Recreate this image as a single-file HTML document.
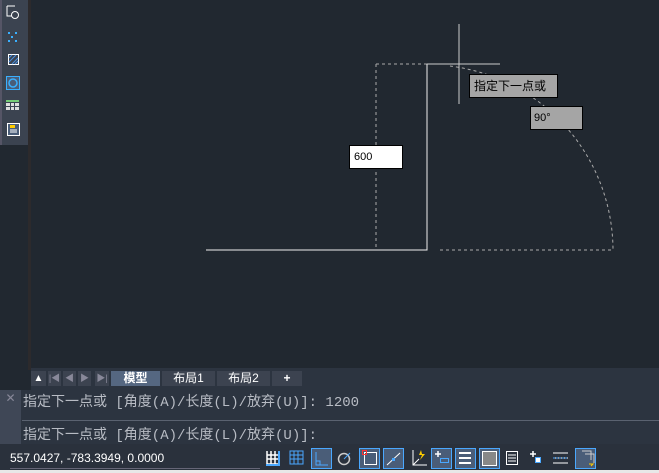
<!DOCTYPE html><html><head><meta charset="utf-8"><style>
*{margin:0;padding:0;box-sizing:border-box}
body{width:659px;height:473px;background:#212830;position:relative;overflow:hidden;font-family:"Liberation Sans","Noto Sans CJK SC",sans-serif}
.a{position:absolute}
.tab{position:absolute;top:371px;height:15px;background:#3c4350;color:#fff;font-size:12px;text-align:center;line-height:15px}
.cmd{position:absolute;left:23px;font-family:"Liberation Mono","Noto Sans CJK SC",monospace;font-size:14px;color:#b8bcc4}
</style></head><body>
<div class="a" style="left:0;top:0;width:28px;height:145px;background:#3b4350"></div>
<div class="a" style="left:0;top:0;width:2px;height:145px;background:#556"></div>
<div class="a" style="left:28px;top:0;width:3px;height:370px;background:#2c2a2c"></div>
<svg class="a" style="left:0;top:0" width="28" height="145">
<path d="M7 6v10h5M7 6h8" stroke="#fff" fill="none"/><circle cx="15" cy="15" r="3.5" stroke="#fff" fill="none"/>
<g fill="#3ab0ff"><rect x="8" y="32" width="2" height="2"/><rect x="15" y="32" width="2" height="2"/><rect x="11" y="36" width="2" height="2"/><rect x="8" y="40" width="2" height="2"/><rect x="15" y="40" width="2" height="2"/></g>
<rect x="8.5" y="54.5" width="10" height="10" stroke="#fff" fill="#3b4350"/><path d="M9 62l7-7M9 58l3-3M12 64l6-6M15 64l3-3" stroke="#4a8fdf"/>
<rect x="6.5" y="76.5" width="13" height="13" stroke="#3ab0ff" fill="#4a5d78"/><circle cx="13" cy="83" r="4" stroke="#3ab0ff" fill="none" stroke-width="1.5"/>
<rect x="6" y="100" width="13" height="2" fill="#7c7"/><g fill="#ddd"><rect x="6" y="103" width="4" height="3"/><rect x="11" y="103" width="3" height="3"/><rect x="15" y="103" width="4" height="3"/><rect x="6" y="107" width="4" height="3"/><rect x="11" y="107" width="3" height="3"/><rect x="15" y="107" width="4" height="3"/></g>
<rect x="7.5" y="123.5" width="12" height="12" stroke="#fff" fill="#4a5d78"/><rect x="10" y="125" width="5" height="3" fill="#fc0"/><path d="M10 130h7M10 132h7" stroke="#fff"/>
</svg>
<svg class="a" style="left:0;top:0" width="659" height="370">
<g stroke="#aaa" stroke-dasharray="3,3" fill="none"><path d="M376 64V250M376 64H427M440 250H613"/><path d="M450 66 A186 186 0 0 1 613 250"/></g>
<path d="M206 250H427V64" stroke="#eee" fill="none"/>
<path d="M459 24V104M427 64H500" stroke="#ccc" fill="none"/>
</svg>
<div class="a" style="left:469px;top:74px;width:89px;height:24px;background:#a5a5a5;border:1px solid #000;font-size:12px;line-height:22px;padding-left:4px">指定下一点或</div>
<div class="a" style="left:530px;top:106px;width:53px;height:24px;background:#a5a5a5;border:1px solid #000;font-size:11px;line-height:22px;padding-left:3px">90°</div>
<div class="a" style="left:349px;top:145px;width:54px;height:24px;background:#fff;border:1px solid #000;font-size:11px;line-height:22px;padding-left:4px">600</div>
<div class="a" style="left:31px;top:368px;width:628px;height:22px;background:#2c3440"></div>
<div class="tab" style="left:31px;width:15px;font-size:10px">▲</div>
<div class="tab" style="left:48px;width:13px;color:#889;font-size:9px">|◀</div>
<div class="tab" style="left:63px;width:13px;color:#889;font-size:9px">◀</div>
<div class="tab" style="left:78px;width:13px;color:#889;font-size:9px">▶</div>
<div class="tab" style="left:95px;width:14px;color:#889;font-size:9px">▶|</div>
<div class="tab" style="left:111px;width:49px;background:#556781;font-weight:bold">模型</div>
<div class="tab" style="left:162px;width:53px">布局1</div>
<div class="tab" style="left:217px;width:53px">布局2</div>
<div class="tab" style="left:272px;width:30px;font-weight:bold">+</div>
<div class="a" style="left:0;top:390px;width:659px;height:54px;background:#2c3440"></div>
<div class="a" style="left:0;top:390px;width:21px;height:54px;background:#3f4756;color:#889;font-size:12px;text-align:center;line-height:16px">✕</div>
<div class="a" style="left:22px;top:420px;width:637px;height:1px;background:#5a6270"></div>
<div class="cmd" style="top:391px">指定下一点或 [角度(A)/长度(L)/放弃(U)]: 1200</div>
<div class="cmd" style="top:424px">指定下一点或 [角度(A)/长度(L)/放弃(U)]:</div>
<div class="a" style="left:0;top:444px;width:659px;height:26px;background:#2a313c"></div>
<div class="a" style="left:10px;top:451px;font-size:12px;color:#fff">557.0427, -783.3949, 0.0000</div>
<div class="a" style="left:10px;top:468px;width:250px;height:1px;background:#667"></div>
<div class="a" style="left:0;top:470px;width:659px;height:3px;background:#e8e8e8"></div>
<svg class="a" style="left:260px;top:444px" width="399" height="26">
<g fill="#4a5d78" stroke="#4aa8ff"><rect x="51.5" y="4.5" width="20" height="20"/><rect x="99.5" y="4.5" width="20" height="20"/><rect x="123.5" y="4.5" width="20" height="20"/><rect x="171.5" y="4.5" width="20" height="20"/><rect x="195.5" y="4.5" width="20" height="20"/><rect x="219.5" y="4.5" width="20" height="20"/><rect x="315.5" y="4.5" width="20" height="20"/></g>
<path d="M7 7v13h13M7 11h13M7 15h13M11 7v13M15 7v13" stroke="#fff" fill="none" stroke-width="1.5"/><path d="M19 7v14h-13" stroke="#4aa8ff" stroke-width="2" fill="none"/>
<path d="M30 7h13v13h-13zM30 11h13M30 15h13M34 7v13M38 7v13" stroke="#4aa8ff" fill="none"/>
<path d="M56 8v13h12M56 17h4v4" stroke="#4aa8ff" fill="none"/>
<circle cx="84" cy="15" r="5.5" stroke="#ccc" stroke-width="1.5" fill="none"/><path d="M84 15l6-6" stroke="#4aa8ff"/>
<rect x="104.5" y="8.5" width="12" height="12" stroke="#fff" fill="none"/><rect x="102.5" y="6.5" width="4" height="4" stroke="#f33" fill="none"/>
<path d="M127 21l13-12" stroke="#fff"/><rect x="132" y="14" width="3" height="3" fill="#4aa8ff"/>
<path d="M153 6v15h14M153 21l6-6" stroke="#fff" fill="none"/><path d="M161 6l-2 5h3l-2 5 5-6h-3z" fill="#fc0"/>
<path d="M175 10h6M178 7v6" stroke="#fff" stroke-width="1.5"/><rect x="180.5" y="14.5" width="8" height="4" stroke="#4aa8ff" fill="none"/>
<path d="M199 9h12M199 14h12M199 19h12" stroke="#fff" stroke-width="2"/>
<rect x="222.5" y="7.5" width="14" height="14" stroke="#fff" fill="#888"/>
<rect x="246.5" y="7.5" width="11" height="13" stroke="#fff" fill="none"/><path d="M248 11h8M248 14h8M248 17h8" stroke="#fff"/>
<path d="M270 10h6M273 7v6" stroke="#fff" stroke-width="1.5"/><rect x="275.5" y="13.5" width="5" height="5" stroke="#4aa8ff" fill="#fff"/>
<path d="M293 9h15M293 14h15M293 19h15" stroke="#fff"/><path d="M293 14h15" stroke="#4aa8ff" stroke-dasharray="2,1"/>
<path d="M322 7h9v9M325 10h9v9" stroke="#ccc" fill="none"/><path d="M329 20h4l-2 2" stroke="#fc0" fill="none"/>
</svg>
</body></html>
